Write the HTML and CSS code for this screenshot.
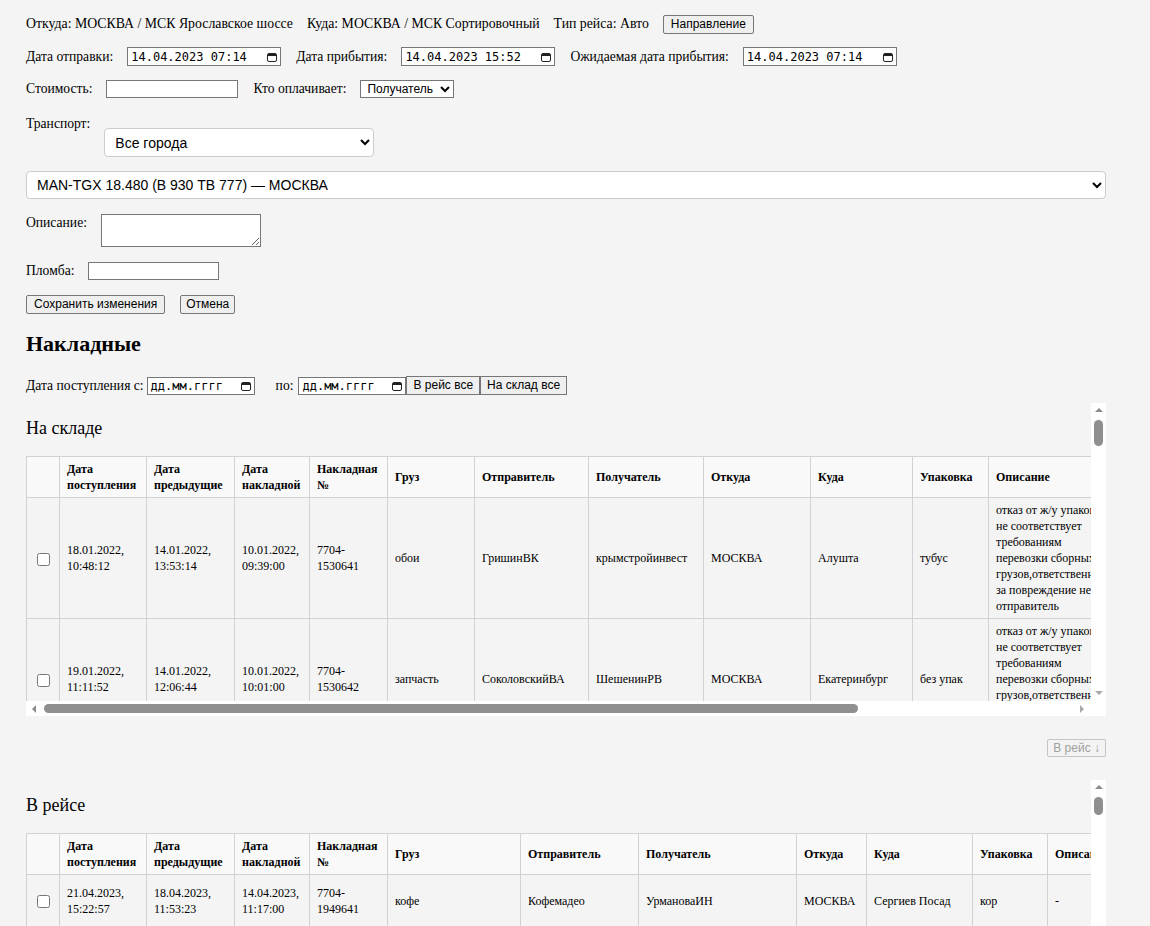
FILE: index.html
```html
<!DOCTYPE html>
<html lang="ru">
<head>
<meta charset="utf-8">
<title>Рейс</title>
<link rel="stylesheet" href="styles.css">
</head>
<body>
<div class="page">
  <div class="row row-route">
    <span>Откуда: МОСКВА / МСК Ярославское шоссе</span>
    <span>Куда: МОСКВА / МСК Сортировочный</span>
    <span>Тип рейса: Авто</span>
    <button class="btn" type="button">Направление</button>
  </div>

  <div class="row row-dates">
    <span class="lbl">Дата отправки:</span>
    <span class="date-field w154"><span>14.04.2023 07:14</span><svg class="cal" viewBox="0 0 10 10" width="10" height="10"><rect x="0.5" y="1.5" width="9" height="8" rx="1.5" fill="none" stroke="#222"/><rect x="1" y="2" width="8" height="2" fill="#222"/></svg></span>
    <span class="lbl">Дата прибытия:</span>
    <span class="date-field w154"><span>14.04.2023 15:52</span><svg class="cal" viewBox="0 0 10 10" width="10" height="10"><rect x="0.5" y="1.5" width="9" height="8" rx="1.5" fill="none" stroke="#222"/><rect x="1" y="2" width="8" height="2" fill="#222"/></svg></span>
    <span class="lbl">Ожидаемая дата прибытия:</span>
    <span class="date-field w154"><span>14.04.2023 07:14</span><svg class="cal" viewBox="0 0 10 10" width="10" height="10"><rect x="0.5" y="1.5" width="9" height="8" rx="1.5" fill="none" stroke="#222"/><rect x="1" y="2" width="8" height="2" fill="#222"/></svg></span>
  </div>

  <div class="row row-cost">
    <span class="lbl">Стоимость:</span>
    <input class="txt cost" type="text">
    <span class="lbl">Кто оплачивает:</span>
    <select class="plain-select payer"><option>Получатель</option></select>
  </div>

  <div class="row row-transport">
    <span class="lbl">Транспорт:</span>
    <select class="nice-select city"><option>Все города</option></select>
  </div>

  <select class="nice-select vehicle"><option>MAN-TGX 18.480 (В 930 ТВ 777) — МОСКВА</option></select>

  <div class="row row-desc">
    <span class="lbl">Описание:</span>
    <textarea class="desc"></textarea>
  </div>

  <div class="row row-seal">
    <span class="lbl">Пломба:</span>
    <input class="txt seal" type="text">
  </div>

  <div class="row row-actions">
    <button class="btn" type="button">Сохранить изменения</button>
    <button class="btn btn-cancel" type="button">Отмена</button>
  </div>

  <h2 class="section-title">Накладные</h2>

  <div class="row row-filter">
    <span>Дата поступления с:</span>
    <span class="date-field w108"><span>дд.мм.гггг</span><svg class="cal" viewBox="0 0 10 10" width="10" height="10"><rect x="0.5" y="1.5" width="9" height="8" rx="1.5" fill="none" stroke="#222"/><rect x="1" y="2" width="8" height="2" fill="#222"/></svg></span>
    <span class="to-lbl">по:</span>
    <span class="date-field w108"><span>дд.мм.гггг</span><svg class="cal" viewBox="0 0 10 10" width="10" height="10"><rect x="0.5" y="1.5" width="9" height="8" rx="1.5" fill="none" stroke="#222"/><rect x="1" y="2" width="8" height="2" fill="#222"/></svg></span>
    <button class="btn btn-join" type="button">В рейс все</button>
    <button class="btn btn-join" type="button">На склад все</button>
  </div>

  <div class="scroll-box">
    <div class="scroll-view">
      <h3 class="box-title">На складе</h3>
      <table class="grid grid-store">
        <colgroup>
          <col class="c-chk"><col class="c-d1"><col class="c-d2"><col class="c-d3"><col class="c-num"><col class="c-cargo"><col class="c-snd"><col class="c-rcv"><col class="c-from"><col class="c-to"><col class="c-pack"><col class="c-desc"><col class="c-x"><col class="c-x"><col class="c-x">
        </colgroup>
        <thead>
          <tr><th></th><th>Дата поступления</th><th>Дата предыдущие</th><th>Дата накладной</th><th>Накладная №</th><th>Груз</th><th>Отправитель</th><th>Получатель</th><th>Откуда</th><th>Куда</th><th>Упаковка</th><th>Описание</th><th>Вес, кг</th><th>Объем, м3</th><th>Мест</th></tr>
        </thead>
        <tbody>
          <tr><td class="chk"><input type="checkbox"></td><td>18.01.2022, 10:48:12</td><td>14.01.2022, 13:53:14</td><td>10.01.2022, 09:39:00</td><td>7704-1530641</td><td>обои</td><td>ГришинВК</td><td>крымстройинвест</td><td>МОСКВА</td><td>Алушта</td><td>тубус</td><td>отказ от ж/у упаковка не соответствует требованиям перевозки сборных грузов,ответственность за повреждение несет отправитель</td><td>12</td><td>0.05</td><td>1</td></tr>
          <tr><td class="chk"><input type="checkbox"></td><td>19.01.2022, 11:11:52</td><td>14.01.2022, 12:06:44</td><td>10.01.2022, 10:01:00</td><td>7704-1530642</td><td>запчасть</td><td>СоколовскийВА</td><td>ШешенинРВ</td><td>МОСКВА</td><td>Екатеринбург</td><td>без упак</td><td>отказ от ж/у упаковка не соответствует требованиям перевозки сборных грузов,ответственность за повреждение несет отправитель</td><td>34</td><td>0.2</td><td>1</td></tr>
          <tr><td class="chk"><input type="checkbox"></td><td>20.01.2022, 09:15:31</td><td>17.01.2022, 16:20:05</td><td>12.01.2022, 11:42:00</td><td>7704-1530655</td><td>мебель</td><td>ПетровАС</td><td>ИвановДМ</td><td>МОСКВА</td><td>Казань</td><td>короб</td><td>отказ от ж/у упаковка не соответствует требованиям перевозки сборных грузов,ответственность за повреждение несет отправитель</td><td>56</td><td>0.8</td><td>3</td></tr>
          <tr><td class="chk"><input type="checkbox"></td><td>21.01.2022, 14:02:10</td><td>18.01.2022, 10:11:43</td><td>13.01.2022, 15:30:00</td><td>7704-1530671</td><td>текстиль</td><td>СмирноваЕА</td><td>ОрловаНВ</td><td>МОСКВА</td><td>Самара</td><td>мешок</td><td>отказ от ж/у упаковка не соответствует требованиям перевозки сборных грузов,ответственность за повреждение несет отправитель</td><td>20</td><td>0.1</td><td>2</td></tr>
        </tbody>
      </table>
    </div>
    <div class="vbar">
      <span class="sb-btn"><span class="arr arr-up"></span></span>
      <span class="vtrack"><span class="thumb thumb-v thumb-store"></span></span>
      <span class="sb-btn"><span class="arr arr-down"></span></span>
    </div>
    <div class="hbar">
      <span class="sb-btn"><span class="arr arr-left"></span></span>
      <span class="htrack"><span class="thumb thumb-h"></span></span>
      <span class="sb-btn"><span class="arr arr-right"></span></span>
    </div>
    <div class="corner"></div>
  </div>

  <div class="move-row">
    <button class="btn btn-move" type="button" disabled>В рейс ↓</button>
  </div>

  <div class="scroll-box">
    <div class="scroll-view">
      <h3 class="box-title">В рейсе</h3>
      <table class="grid grid-trip">
        <colgroup>
          <col class="c-chk"><col class="c-d1"><col class="c-d2"><col class="c-d3"><col class="c-num"><col class="c-cargo"><col class="c-snd"><col class="c-rcv"><col class="c-from"><col class="c-to"><col class="c-pack"><col class="c-desc"><col class="c-x"><col class="c-x"><col class="c-x">
        </colgroup>
        <thead>
          <tr><th></th><th>Дата поступления</th><th>Дата предыдущие</th><th>Дата накладной</th><th>Накладная №</th><th>Груз</th><th>Отправитель</th><th>Получатель</th><th>Откуда</th><th>Куда</th><th>Упаковка</th><th>Описание</th><th>Вес, кг</th><th>Объем, м3</th><th>Мест</th></tr>
        </thead>
        <tbody>
          <tr><td class="chk"><input type="checkbox"></td><td>21.04.2023, 15:22:57</td><td>18.04.2023, 11:53:23</td><td>14.04.2023, 11:17:00</td><td>7704-1949641</td><td>кофе</td><td>Кофемадео</td><td>УрмановаИН</td><td>МОСКВА</td><td>Сергиев Посад</td><td>кор</td><td>-</td><td>24</td><td>0.1</td><td>2</td></tr>
          <tr><td class="chk"><input type="checkbox"></td><td>21.04.2023, 16:05:12</td><td>18.04.2023, 12:40:09</td><td>14.04.2023, 12:02:00</td><td>7704-1949652</td><td>чай</td><td>ЧайныйДом</td><td>ЖуковаЕВ</td><td>МОСКВА</td><td>Сергиев Посад</td><td>кор</td><td>-</td><td>16</td><td>0.08</td><td>1</td></tr>
          <tr><td class="chk"><input type="checkbox"></td><td>22.04.2023, 09:31:44</td><td>19.04.2023, 10:15:37</td><td>15.04.2023, 09:20:00</td><td>7704-1949667</td><td>текстиль</td><td>ТканиПлюс</td><td>РомановаАС</td><td>МОСКВА</td><td>Ярославль</td><td>мешок</td><td>-</td><td>30</td><td>0.2</td><td>3</td></tr>
          <tr><td class="chk"><input type="checkbox"></td><td>22.04.2023, 11:48:03</td><td>19.04.2023, 14:27:51</td><td>15.04.2023, 13:45:00</td><td>7704-1949673</td><td>посуда</td><td>КерамикаРус</td><td>ЛосевДА</td><td>МОСКВА</td><td>Владимир</td><td>кор</td><td>-</td><td>19</td><td>0.12</td><td>1</td></tr>
        </tbody>
      </table>
    </div>
    <div class="vbar">
      <span class="sb-btn"><span class="arr arr-up"></span></span>
      <span class="vtrack"><span class="thumb thumb-v thumb-trip"></span></span>
      <span class="sb-btn"><span class="arr arr-down"></span></span>
    </div>
    <div class="hbar">
      <span class="sb-btn"><span class="arr arr-left"></span></span>
      <span class="htrack"><span class="thumb thumb-h"></span></span>
      <span class="sb-btn"><span class="arr arr-right"></span></span>
    </div>
    <div class="corner"></div>
  </div>
</div>
</body>
</html>
```

FILE: styles.css
```css
html {
  background: #f4f4f4;
  scrollbar-width: none;
}
html::-webkit-scrollbar {
  display: none;
}
body {
  margin: 0;
  background: #f4f4f4;
  color: #000;
  font-family: "Liberation Serif", "Times New Roman", serif;
  font-size: 13.6px;
  line-height: 16px;
}
.page {
  width: 1080px;
  margin-left: 26px;
  padding-top: 14px;
}
.row {
  display: flex;
  align-items: center;
}
.row-route {
  height: 20px;
  gap: 14px;
  margin-bottom: 13px;
  font-size: 13.8px;
}
.row-dates {
  height: 19px;
  margin-bottom: 14px;
}
.row-cost {
  height: 18px;
  margin-bottom: 14px;
}
.lbl {
  margin-right: 14px;
}
.row > * + .lbl {
  margin-left: 15px;
}

/* buttons */
.btn {
  font-family: "Liberation Sans", Arial, sans-serif;
  font-size: 12px;
  height: 19px;
  padding: 0 7px;
  border: 1px solid #767676;
  border-radius: 2px;
  background: #efefef;
  color: #000;
  line-height: 17px;
  box-sizing: border-box;
}
.btn-cancel {
  padding: 0 5px;
}
.btn:disabled {
  background: #f3f3f3;
  border-color: #c4c4c4;
  color: #a0a0a0;
}

/* date fields */
.date-field {
  display: inline-flex;
  align-items: center;
  justify-content: space-between;
  box-sizing: border-box;
  height: 19px;
  padding: 0 3px 0 3px;
  border: 1px solid #767676;
  background: #fff;
  font-family: "DejaVu Sans Mono", "Liberation Mono", monospace;
  font-size: 12px;
  white-space: pre;
}
.w154 { width: 154px; }
.w108 { width: 108px; height: 18px; }
.cal { display: block; }

/* inputs */
.txt {
  box-sizing: border-box;
  height: 18px;
  border: 1px solid #767676;
  background: #fff;
  padding: 1px 2px;
  margin: 0;
}
.cost { width: 132px; }
.seal { width: 131px; }
.plain-select {
  box-sizing: border-box;
  width: 94px;
  height: 18px;
  margin: 0;
  font-family: "Liberation Sans", Arial, sans-serif;
  font-size: 12px;
  border: 1px solid #767676;
  background: #fff;
  padding: 0 0 0 2px;
}
.nice-select {
  box-sizing: border-box;
  display: block;
  margin: 0;
  background: #fff;
  border: 1px solid #cccccc;
  border-radius: 4px;
  font-family: "Liberation Sans", Arial, sans-serif;
  font-size: 14px;
  color: #000;
  padding: 0 6px;
}
.row-transport {
  align-items: flex-start;
  margin-top: 18px;
}
.city {
  width: 270px;
  height: 29px;
  margin-top: 12px;
}
.vehicle {
  width: 1080px;
  height: 28px;
  margin-top: 14px;
}
.row-desc {
  align-items: flex-start;
  margin-top: 15px;
}
.row-desc .lbl {
  margin-top: 1px;
}
.desc {
  box-sizing: border-box;
  width: 160px;
  height: 33px;
  margin: 0;
  border: 1px solid #767676;
  background: #fff;
  resize: both;
}
.row-seal {
  margin-top: 15px;
  height: 18px;
}
.row-actions {
  margin-top: 15px;
  gap: 15px;
}
.section-title {
  font-size: 22px;
  line-height: 26px;
  font-weight: bold;
  margin: 17px 0 19px;
}
.row-filter {
  height: 19px;
  margin-bottom: 8px;
}
.row-filter > span:first-child {
  margin-right: 3px;
}
.to-lbl {
  margin: 0 5px 0 21px;
}
.btn-join {
  border-radius: 0;
  padding: 0 6px;
}

/* scroll containers with drawn scrollbars */
.scroll-box {
  display: grid;
  grid-template-columns: 1065px 15px;
  grid-template-rows: 298px 15px;
}
.scroll-view {
  overflow: hidden;
  min-width: 0;
}
.vbar,
.hbar {
  display: flex;
  background: #fff;
}
.vbar {
  flex-direction: column;
}
.corner {
  background: #fff;
}
.sb-btn {
  flex: 0 0 15px;
  display: flex;
  align-items: center;
  justify-content: center;
}
.vtrack {
  flex: 1;
  padding: 2px 3px 0;
}
.htrack {
  flex: 1;
  padding: 3px 3px;
}
.thumb {
  display: block;
  background: #8f8f8f;
  border-radius: 5px;
}
.thumb-v {
  width: 9px;
}
.thumb-store { height: 26px; }
.thumb-trip { height: 18px; }
.thumb-h {
  height: 9px;
  width: 814px;
}
.arr {
  display: block;
  width: 0;
  height: 0;
}
.arr-up {
  border-left: 4px solid transparent;
  border-right: 4px solid transparent;
  border-bottom: 4px solid #8a8a8a;
  margin-top: -2px;
}
.arr-down {
  border-left: 4px solid transparent;
  border-right: 4px solid transparent;
  border-top: 4px solid #a8a8a8;
  margin-top: -2px;
}
.arr-left {
  border-top: 4px solid transparent;
  border-bottom: 4px solid transparent;
  border-right: 4px solid #8a8a8a;
  margin-left: 1px;
}
.arr-right {
  border-top: 4px solid transparent;
  border-bottom: 4px solid transparent;
  border-left: 4px solid #a8a8a8;
  margin-left: -3px;
}
.box-title {
  font-size: 18px;
  line-height: 20px;
  font-weight: normal;
  margin: 15px 0 18px;
}

/* tables */
.grid {
  border-collapse: collapse;
  table-layout: fixed;
  font-size: 12px;
  line-height: 16px;
}
.grid th,
.grid td {
  border: 1px solid #d2d2d2;
  padding: 4px 7px;
  text-align: left;
  vertical-align: middle;
}
.grid th {
  background: #f9f9fa;
  font-weight: bold;
}
.grid td.chk {
  text-align: center;
  padding: 0;
}
.grid td.chk input {
  margin: 0;
  vertical-align: middle;
}
.grid-store { width: 1358px; }
.grid-store .c-chk { width: 33px; }
.grid-store .c-d1 { width: 87px; }
.grid-store .c-d2 { width: 88px; }
.grid-store .c-d3 { width: 75px; }
.grid-store .c-num { width: 78px; }
.grid-store .c-cargo { width: 87px; }
.grid-store .c-snd { width: 114px; }
.grid-store .c-rcv { width: 115px; }
.grid-store .c-from { width: 107px; }
.grid-store .c-to { width: 102px; }
.grid-store .c-pack { width: 76px; }
.grid-store .c-desc { width: 128px; }
.grid-store .c-x { width: 89px; }

.grid-trip { width: 1361px; }
.grid-trip tbody tr { height: 52px; }
.grid-trip .c-chk { width: 33px; }
.grid-trip .c-d1 { width: 87px; }
.grid-trip .c-d2 { width: 88px; }
.grid-trip .c-d3 { width: 75px; }
.grid-trip .c-num { width: 78px; }
.grid-trip .c-cargo { width: 133px; }
.grid-trip .c-snd { width: 118px; }
.grid-trip .c-rcv { width: 158px; }
.grid-trip .c-from { width: 70px; }
.grid-trip .c-to { width: 106px; }
.grid-trip .c-pack { width: 75px; }
.grid-trip .c-desc { width: 130px; }
.grid-trip .c-x { width: 70px; }

.move-row {
  display: flex;
  justify-content: flex-end;
  margin: 23px 0 23px;
}
.btn-move {
  font-size: 12px;
  height: 18px;
  padding: 0 5px;
  line-height: 16px;
}
```
